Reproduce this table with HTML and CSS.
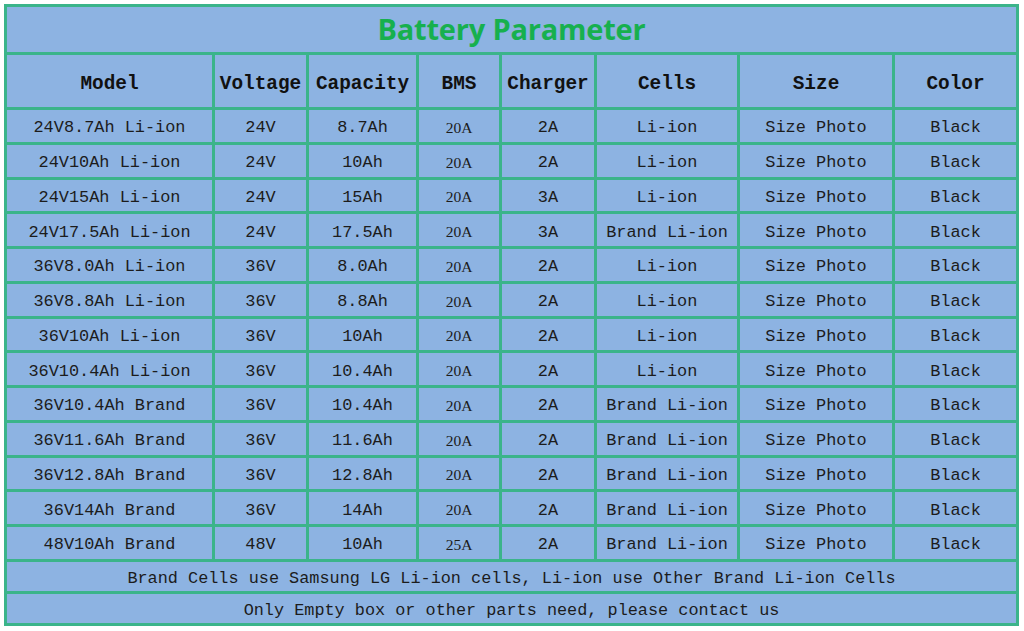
FILE: index.html
```html
<!DOCTYPE html>
<html>
<head>
<meta charset="utf-8">
<link rel="stylesheet" href="styles.css">
</head>
<body>
<div class="sheet">
  <div class="cell title">Battery Parameter</div>
  <div class="cell head">Model</div>
  <div class="cell head">Voltage</div>
  <div class="cell head">Capacity</div>
  <div class="cell head">BMS</div>
  <div class="cell head">Charger</div>
  <div class="cell head">Cells</div>
  <div class="cell head">Size</div>
  <div class="cell head">Color</div>

  <div class="cell">24V8.7Ah Li-ion</div><div class="cell">24V</div><div class="cell">8.7Ah</div><div class="cell bms">20A</div><div class="cell">2A</div><div class="cell">Li-ion</div><div class="cell">Size Photo</div><div class="cell">Black</div>
  <div class="cell">24V10Ah Li-ion</div><div class="cell">24V</div><div class="cell">10Ah</div><div class="cell bms">20A</div><div class="cell">2A</div><div class="cell">Li-ion</div><div class="cell">Size Photo</div><div class="cell">Black</div>
  <div class="cell">24V15Ah Li-ion</div><div class="cell">24V</div><div class="cell">15Ah</div><div class="cell bms">20A</div><div class="cell">3A</div><div class="cell">Li-ion</div><div class="cell">Size Photo</div><div class="cell">Black</div>
  <div class="cell">24V17.5Ah Li-ion</div><div class="cell">24V</div><div class="cell">17.5Ah</div><div class="cell bms">20A</div><div class="cell">3A</div><div class="cell">Brand Li-ion</div><div class="cell">Size Photo</div><div class="cell">Black</div>
  <div class="cell">36V8.0Ah Li-ion</div><div class="cell">36V</div><div class="cell">8.0Ah</div><div class="cell bms">20A</div><div class="cell">2A</div><div class="cell">Li-ion</div><div class="cell">Size Photo</div><div class="cell">Black</div>
  <div class="cell">36V8.8Ah Li-ion</div><div class="cell">36V</div><div class="cell">8.8Ah</div><div class="cell bms">20A</div><div class="cell">2A</div><div class="cell">Li-ion</div><div class="cell">Size Photo</div><div class="cell">Black</div>
  <div class="cell">36V10Ah Li-ion</div><div class="cell">36V</div><div class="cell">10Ah</div><div class="cell bms">20A</div><div class="cell">2A</div><div class="cell">Li-ion</div><div class="cell">Size Photo</div><div class="cell">Black</div>
  <div class="cell">36V10.4Ah Li-ion</div><div class="cell">36V</div><div class="cell">10.4Ah</div><div class="cell bms">20A</div><div class="cell">2A</div><div class="cell">Li-ion</div><div class="cell">Size Photo</div><div class="cell">Black</div>
  <div class="cell">36V10.4Ah Brand</div><div class="cell">36V</div><div class="cell">10.4Ah</div><div class="cell bms">20A</div><div class="cell">2A</div><div class="cell">Brand Li-ion</div><div class="cell">Size Photo</div><div class="cell">Black</div>
  <div class="cell">36V11.6Ah Brand</div><div class="cell">36V</div><div class="cell">11.6Ah</div><div class="cell bms">20A</div><div class="cell">2A</div><div class="cell">Brand Li-ion</div><div class="cell">Size Photo</div><div class="cell">Black</div>
  <div class="cell">36V12.8Ah Brand</div><div class="cell">36V</div><div class="cell">12.8Ah</div><div class="cell bms">20A</div><div class="cell">2A</div><div class="cell">Brand Li-ion</div><div class="cell">Size Photo</div><div class="cell">Black</div>
  <div class="cell">36V14Ah Brand</div><div class="cell">36V</div><div class="cell">14Ah</div><div class="cell bms">20A</div><div class="cell">2A</div><div class="cell">Brand Li-ion</div><div class="cell">Size Photo</div><div class="cell">Black</div>
  <div class="cell">48V10Ah Brand</div><div class="cell">48V</div><div class="cell">10Ah</div><div class="cell bms">25A</div><div class="cell">2A</div><div class="cell">Brand Li-ion</div><div class="cell">Size Photo</div><div class="cell">Black</div>

  <div class="cell note">Brand Cells use Samsung LG Li-ion cells, Li-ion use Other Brand Li-ion Cells</div>
  <div class="cell note">Only Empty box or other parts need, please contact us</div>
</div>
</body>
</html>
```

FILE: styles.css
```css
html, body {
  margin: 0;
  padding: 0;
  background: #ffffff;
}
body {
  padding: 4px 0 0 4px;
}
.sheet {
  display: grid;
  width: 1009px;
  padding: 3px;
  gap: 3px;
  background: #3bb48a;
  grid-template-columns: 205px 91px 107px 80px 92px 140px 152px 121px;
  grid-template-rows: 45px 52px repeat(13, 31.75px) 29px 29px;
}
.cell {
  background: #8db3e2;
  display: flex;
  align-items: center;
  justify-content: center;
  white-space: nowrap;
  overflow: hidden;
  box-sizing: border-box;
  padding-top: 4px;
  font-family: "Liberation Mono", monospace;
  font-size: 16.9px;
  color: #1c1c1c;
}
.title {
  grid-column: 1 / -1;
  padding-top: 0;
  padding-bottom: 2px;
  font-family: "Open Sans", "Noto Sans", sans-serif;
  font-weight: 700;
  font-size: 29px;
  color: #17b04e;
  letter-spacing: -0.2px;
}
.head {
  padding-top: 6px;
  font-size: 19.4px;
  font-weight: 700;
  color: #111111;
}
.bms {
  font-family: "Liberation Serif", serif;
  font-size: 15.5px;
}
.note {
  grid-column: 1 / -1;
  font-size: 16.85px;
}
```
